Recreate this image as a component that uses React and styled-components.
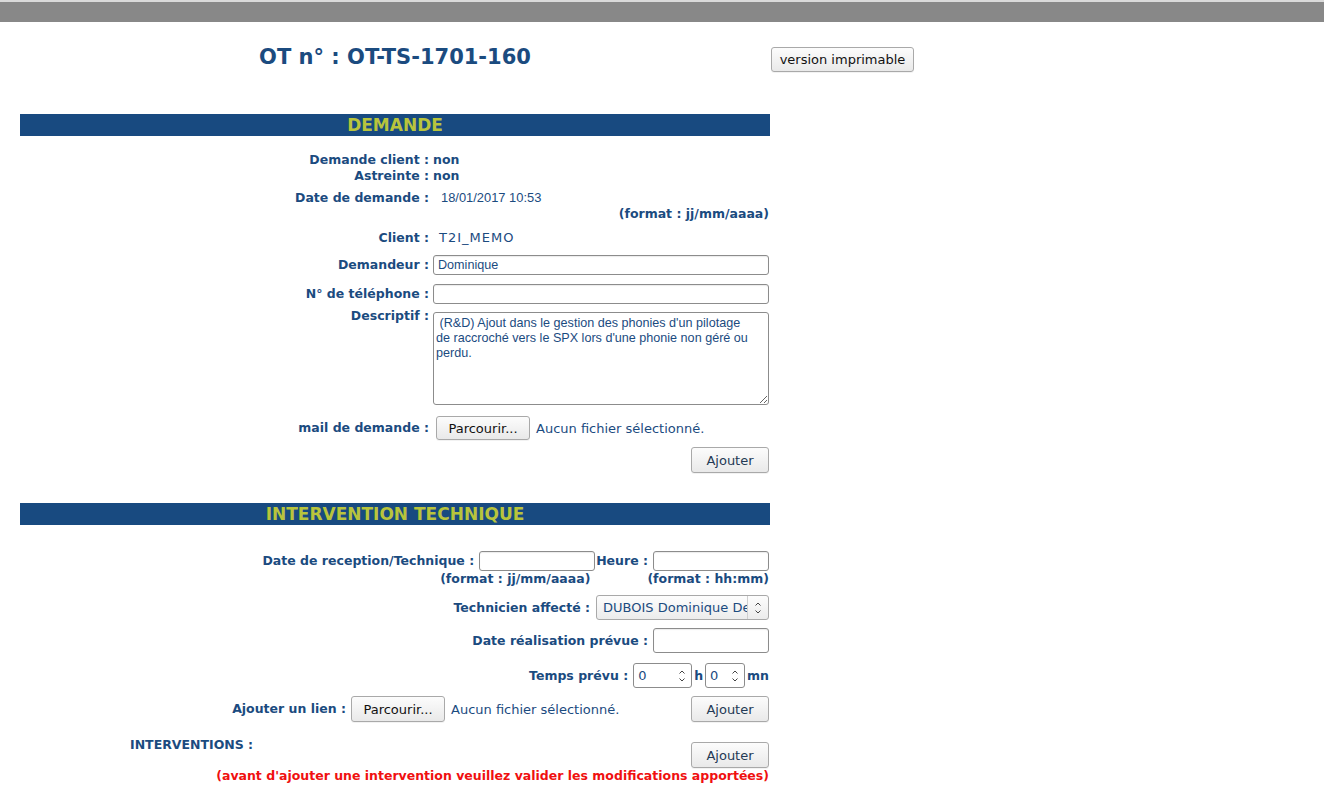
import React from 'react';
import styled, { createGlobalStyle } from 'styled-components';

const GlobalStyle = createGlobalStyle`
  body {
    margin: 0;
    background: #fff;
    font-family: 'DejaVu Sans', 'Noto Sans', sans-serif;
  }
`;

const BLUE = '#1b4b7f';

const TopBar = styled.div`
  height: 20px;
  border-top: 2px solid #dadada;
  background: #888888;
`;

const Main = styled.div`
  padding-left: 20px;
  width: 900px;
`;

const HeaderRow = styled.div`
  display: grid;
  grid-template-columns: 750px auto;
  column-gap: 1px;
  align-items: start;
  margin-top: 23px;
`;

const Title = styled.h1`
  margin: 0;
  font-size: 21px;
  line-height: 24px;
  font-weight: bold;
  color: ${BLUE};
  text-align: center;
`;

const Button = styled.button`
  height: ${p => p.$h || 26}px;
  width: ${p => (p.$w ? `${p.$w}px` : 'auto')};
  margin: ${p => p.$m || '0'};
  padding: 0 6px;
  border: 1px solid #a9a9a9;
  border-radius: 3px;
  background: linear-gradient(#fcfcfc, #e9e9e9);
  font-family: 'DejaVu Sans', sans-serif;
  font-size: 13px;
  white-space: nowrap;
  color: ${p => p.$blue ? '#243a55' : '#111'};
  box-shadow: 0 1px 0 rgba(0, 0, 0, 0.05);
  cursor: pointer;
`;

const SectionBar = styled.div`
  width: 750px;
  height: 22px;
  margin-top: ${p => p.$mt}px;
  background: #184a80;
  color: #b8c43c;
  font-size: 17px;
  font-weight: bold;
  line-height: 22px;
  text-align: center;
`;

const FieldRow = styled.div`
  display: grid;
  grid-template-columns: 409px 337px;
  column-gap: 4px;
  align-items: ${p => p.$top ? 'start' : 'center'};
  margin-top: ${p => p.$mt || 0}px;
  width: 750px;
`;

const Label = styled.div`
  text-align: right;
  font-size: 12.5px;
  font-weight: bold;
  line-height: 16px;
  color: ${BLUE};
  white-space: nowrap;
  margin-top: ${p => p.$mt || 0}px;
`;

const Value = styled.div`
  font-size: ${p => p.$fs || 12.5}px;
  font-family: ${p => p.$sans ? "'Liberation Sans', Arial, sans-serif" : "'DejaVu Sans', sans-serif"};
  font-weight: ${p => p.$bold ? 'bold' : 'normal'};
  letter-spacing: ${p => p.$ls || 0}px;
  line-height: 16px;
  color: ${BLUE};
  padding-left: ${p => p.$pl || 0}px;
  white-space: nowrap;
`;

const Note = styled.div`
  width: 749px;
  text-align: right;
  font-size: 12.5px;
  font-weight: bold;
  line-height: 16px;
  color: ${p => p.$red ? '#f01010' : BLUE};
  white-space: nowrap;
`;

const TextInput = styled.input`
  box-sizing: border-box;
  width: ${p => p.$w || 336}px;
  height: ${p => p.$h || 20}px;
  margin: 0;
  padding: 0 4px;
  border: 1px solid #8c8c8c;
  border-radius: 3px;
  box-shadow: inset 0 1px 1px rgba(0, 0, 0, 0.08);
  font-family: 'Liberation Sans', Arial, sans-serif;
  font-size: 12.6px;
  color: ${BLUE};
  outline: none;
`;

const TextArea = styled.textarea`
  box-sizing: border-box;
  width: 336px;
  height: 93px;
  margin: 0;
  padding: 3px 2px;
  border: 1px solid #8c8c8c;
  border-radius: 3px;
  font-family: 'Liberation Sans', Arial, sans-serif;
  font-size: 12.6px;
  line-height: 15px;
  color: ${BLUE};
  white-space: pre;
  overflow: hidden;
  resize: both;
  outline: none;
`;

const FileLine = styled.div`
  display: flex;
  align-items: center;
  gap: 6px;
`;

const FileText = styled.span`
  font-size: 13px;
  color: ${BLUE};
  white-space: nowrap;
`;

const EndRow = styled.div`
  display: flex;
  justify-content: flex-end;
  align-items: center;
  gap: ${p => p.$gap || 0}px;
  width: 749px;
  margin-top: ${p => p.$mt || 0}px;
`;

const Inline = styled.span`
  font-size: 12.5px;
  font-weight: bold;
  line-height: 16px;
  color: ${BLUE};
  white-space: nowrap;
  margin: ${p => p.$m || '0'};
`;

const FakeSelect = styled.div`
  box-sizing: border-box;
  display: flex;
  width: 173px;
  height: 25px;
  border: 1px solid #a9a9a9;
  border-radius: 3px;
  background: linear-gradient(#fdfdfd, #ececec);
  overflow: hidden;
`;

const SelectText = styled.span`
  flex: 1;
  overflow: hidden;
  white-space: nowrap;
  padding-left: 6px;
  font-size: 13px;
  line-height: 23px;
  color: ${BLUE};
`;

const SelectArrow = styled.span`
  display: flex;
  align-items: center;
  justify-content: center;
  width: 20px;
  border-left: 1px solid #cfcfcf;
`;

const NumberBox = styled.div`
  box-sizing: border-box;
  display: flex;
  align-items: center;
  width: ${p => p.$w}px;
  height: 25px;
  padding: 0 5px 0 4px;
  border: 1px solid #8c8c8c;
  border-radius: 3px;
  font-size: 13px;
  color: ${BLUE};
`;

const NumberValue = styled.span`
  flex: 1;
`;

const LinkRow = styled.div`
  display: flex;
  align-items: center;
  width: 749px;
  margin-top: ${p => p.$mt || 0}px;
`;

const LinkLabel = styled(Label)`
  width: 326px;
  margin-right: 5px;
`;

const Spacer = styled.div`
  flex: 1;
`;

const InterventionsRow = styled.div`
  display: flex;
  align-items: flex-start;
  width: 749px;
  margin-top: ${p => p.$mt || 0}px;
`;

const InterventionsLabel = styled.div`
  padding-left: 110px;
  font-size: 12.5px;
  font-weight: bold;
  line-height: 16px;
  color: ${BLUE};
  margin-top: -5px;
`;

const Spin = () => (
  <svg width="8" height="16" viewBox="0 0 8 16" fill="none" stroke="#444" strokeWidth="1">
    <path d="M1.5 5.5 L4 3 L6.5 5.5" />
    <path d="M1.5 10.5 L4 13 L6.5 10.5" />
  </svg>
);

const description =
  " (R&D) Ajout dans le gestion des phonies d'un pilotage\nde raccroché vers le SPX lors d'une phonie non géré ou\nperdu.";

const App = () => (
  <>
    <GlobalStyle />
    <TopBar />
    <Main>
      <HeaderRow>
        <Title>OT n° : OT-TS-1701-160</Title>
        <Button $h={25} $w={143} $m="2px 0 0 0">version imprimable</Button>
      </HeaderRow>

      <SectionBar $mt={42}>DEMANDE</SectionBar>

      <FieldRow $mt={16}>
        <Label>Demande client :</Label>
        <Value $bold>non</Value>
      </FieldRow>
      <FieldRow>
        <Label>Astreinte :</Label>
        <Value $bold>non</Value>
      </FieldRow>
      <FieldRow $mt={6}>
        <Label>Date de demande :</Label>
        <Value $fs={12.9} $sans $pl={8}>18/01/2017 10:53</Value>
      </FieldRow>
      <Note>(format : jj/mm/aaaa)</Note>
      <FieldRow $mt={8}>
        <Label>Client :</Label>
        <Value $fs={13} $ls={1} $pl={6}>T2I_MEMO</Value>
      </FieldRow>
      <FieldRow $mt={9}>
        <Label>Demandeur :</Label>
        <TextInput defaultValue="Dominique" />
      </FieldRow>
      <FieldRow $mt={9}>
        <Label>N° de téléphone :</Label>
        <TextInput />
      </FieldRow>
      <FieldRow $mt={8} $top>
        <Label $mt={-4}>Descriptif :</Label>
        <TextArea defaultValue={description} />
      </FieldRow>
      <FieldRow $mt={11}>
        <Label>mail de demande :</Label>
        <FileLine>
          <Button $h={24} $w={94} $m="0 0 0 3px">Parcourir...</Button>
          <FileText>Aucun fichier sélectionné.</FileText>
        </FileLine>
      </FieldRow>
      <EndRow $mt={7}>
        <Button $w={78} $blue>Ajouter</Button>
      </EndRow>

      <SectionBar $mt={30}>INTERVENTION TECHNIQUE</SectionBar>

      <EndRow $mt={26}>
        <Inline $m="0 5px 0 0">Date de reception/Technique :</Inline>
        <TextInput $w={116} />
        <Inline $m="0 5px 0 1px">Heure :</Inline>
        <TextInput $w={116} />
      </EndRow>
      <EndRow $gap={57}>
        <Inline>(format : jj/mm/aaaa)</Inline>
        <Inline>(format : hh:mm)</Inline>
      </EndRow>
      <EndRow $mt={8}>
        <Inline $m="0 6px 0 0">Technicien affecté :</Inline>
        <FakeSelect>
          <SelectText>DUBOIS Dominique Dev</SelectText>
          <SelectArrow><Spin /></SelectArrow>
        </FakeSelect>
      </EndRow>
      <EndRow $mt={8}>
        <Inline $m="0 5px 0 0">Date réalisation prévue :</Inline>
        <TextInput $w={116} $h={25} />
      </EndRow>
      <EndRow $mt={10}>
        <Inline $m="0 5px 0 0">Temps prévu :</Inline>
        <NumberBox $w={59}>
          <NumberValue>0</NumberValue>
          <Spin />
        </NumberBox>
        <Inline $m="0 2px">h</Inline>
        <NumberBox $w={40}>
          <NumberValue>0</NumberValue>
          <Spin />
        </NumberBox>
        <Inline $m="0 0 0 2px">mn</Inline>
      </EndRow>
      <LinkRow $mt={8}>
        <LinkLabel>Ajouter un lien :</LinkLabel>
        <FileLine>
          <Button $h={26} $w={94}>Parcourir...</Button>
          <FileText>Aucun fichier sélectionné.</FileText>
        </FileLine>
        <Spacer />
        <Button $w={78} $blue>Ajouter</Button>
      </LinkRow>
      <InterventionsRow $mt={20}>
        <InterventionsLabel>INTERVENTIONS :</InterventionsLabel>
        <Spacer />
        <Button $w={78} $blue>Ajouter</Button>
      </InterventionsRow>
      <Note $red>(avant d'ajouter une intervention veuillez valider les modifications apportées)</Note>
    </Main>
  </>
);

export default App;
